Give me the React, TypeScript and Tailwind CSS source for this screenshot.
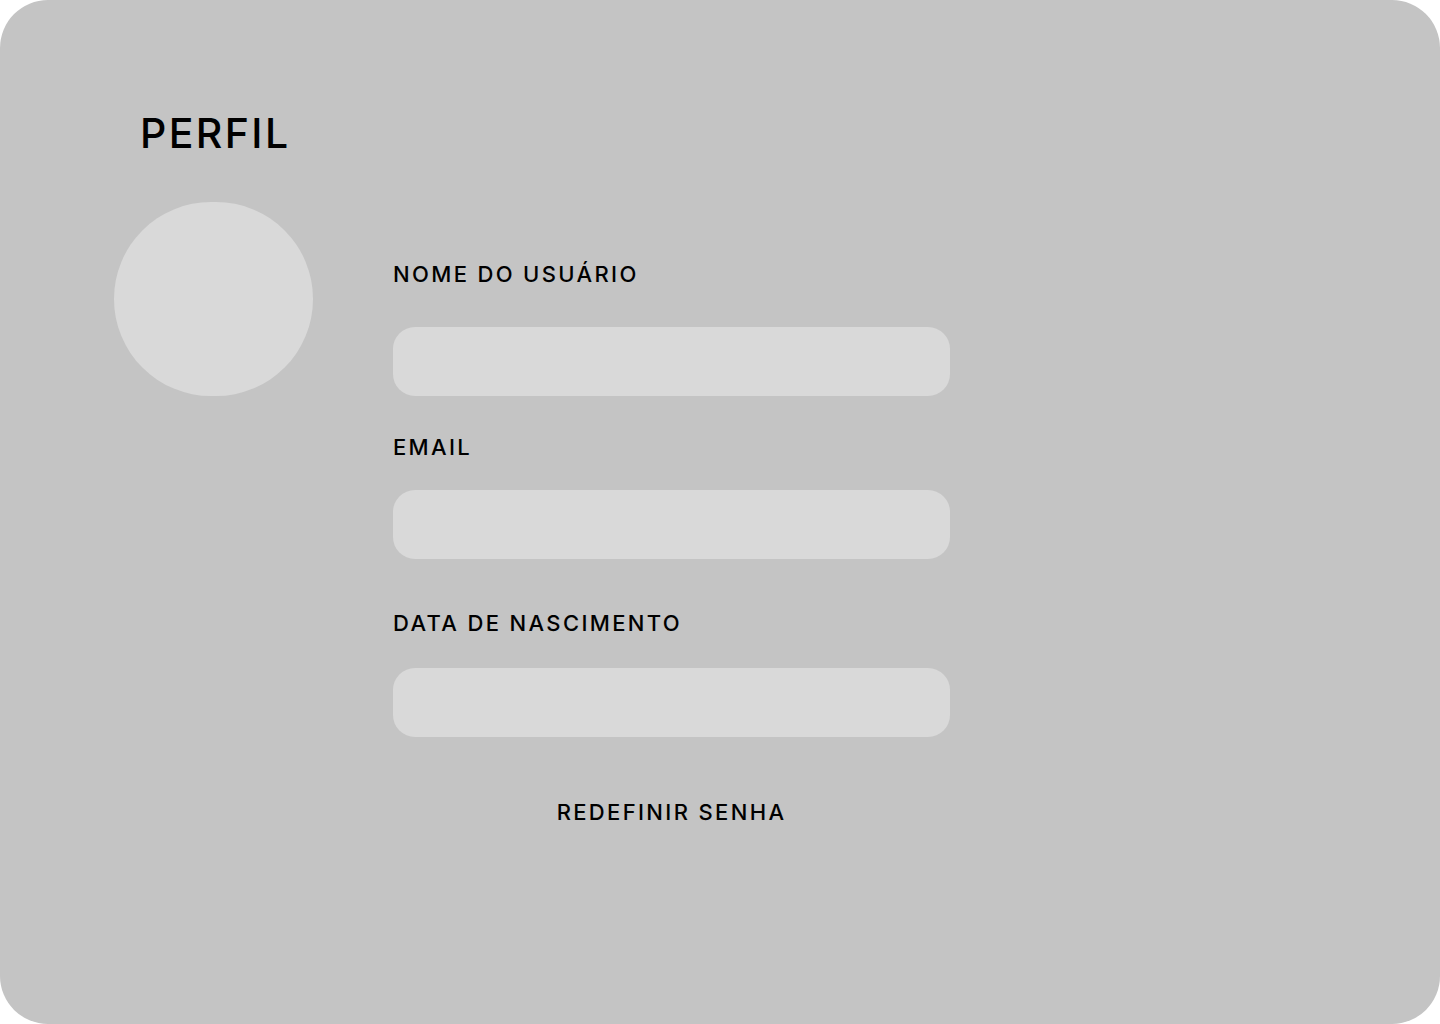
const font = "font-['Inter','Liberation_Sans',sans-serif]";

function Field({ label, labelClass, inputClass }: { label: string; labelClass: string; inputClass: string }) {
  return (
    <div>
      <p className={`text-[22px] leading-[22px] font-medium tracking-[2.35px] text-black ${labelClass}`}>{label}</p>
      <div className={`h-[69px] w-[557px] rounded-[22px] bg-[#d9d9d9] ${inputClass}`} />
    </div>
  );
}

export default function App() {
  return (
    <div className={`min-h-[1024px] w-full bg-white ${font}`}>
      <div className="h-[1024px] w-full rounded-[48px] bg-[#c4c4c4] pt-[113px]">
        <h1 className="pl-[140px] text-[41px] leading-[41px] font-medium tracking-[2.4px] text-black">PERFIL</h1>
        <div className="mt-[48px] flex items-start gap-[80px] pl-[114px]">
          <div className="h-[194px] w-[199px] shrink-0 rounded-full bg-[#d9d9d9]" />
          <div className="flex flex-col pt-[61px]">
            <Field label="NOME DO USUÁRIO" labelClass="" inputClass="mt-[42px]" />
            <Field label="EMAIL" labelClass="mt-[40px]" inputClass="mt-[32px]" />
            <Field label="DATA DE NASCIMENTO" labelClass="mt-[53px]" inputClass="mt-[34px]" />
            <button className="mt-[64px] w-[557px] text-center text-[22px] leading-[22px] font-medium tracking-[2.35px] text-black">
              REDEFINIR SENHA
            </button>
          </div>
        </div>
      </div>
    </div>
  );
}
